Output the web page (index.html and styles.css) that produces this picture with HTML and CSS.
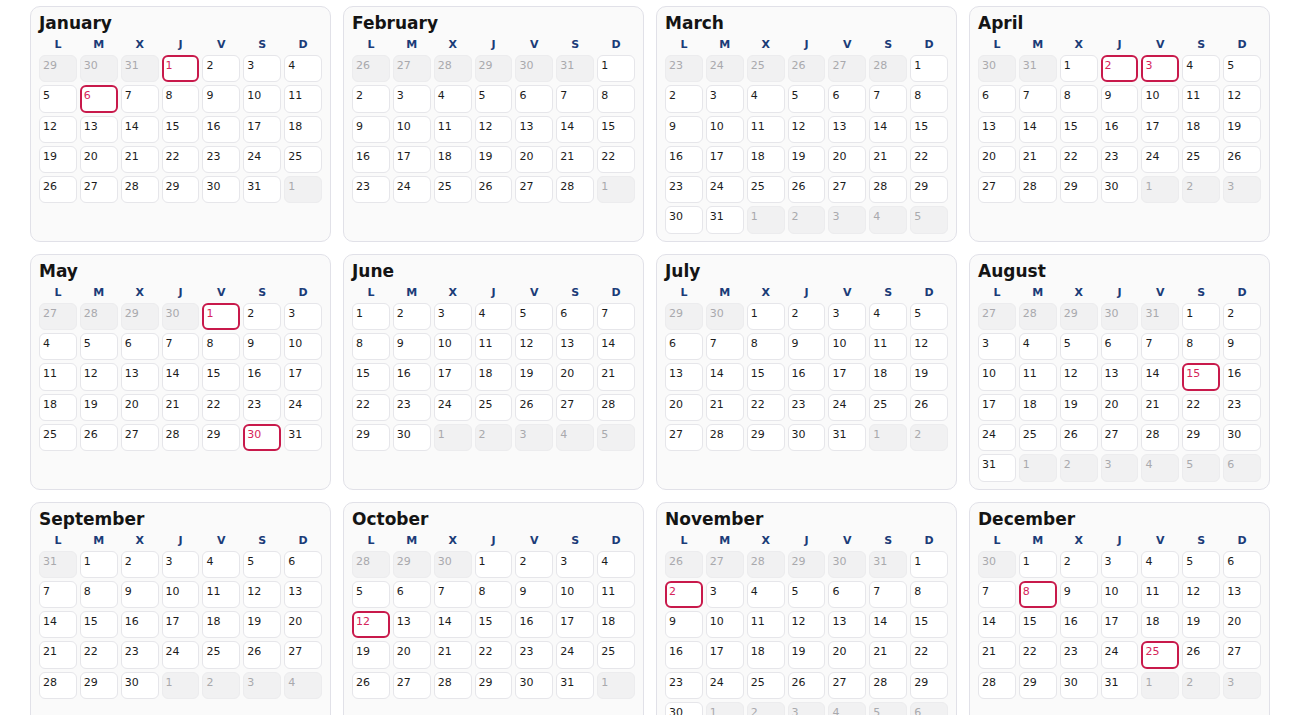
FILE: index.html
```html
<!DOCTYPE html>
<html lang="es">
<head>
<meta charset="utf-8">
<title>Calendario 2026</title>
<link rel="stylesheet" href="styles.css">
</head>
<body>
<main class="year">

<section class="month">
<h2>January</h2>
<div class="wk"><b>L</b><b>M</b><b>X</b><b>J</b><b>V</b><b>S</b><b>D</b></div>
<div class="days">
<span class="o">29</span><span class="o">30</span><span class="o">31</span><span class="h">1</span><span>2</span><span>3</span><span>4</span>
<span>5</span><span class="h">6</span><span>7</span><span>8</span><span>9</span><span>10</span><span>11</span>
<span>12</span><span>13</span><span>14</span><span>15</span><span>16</span><span>17</span><span>18</span>
<span>19</span><span>20</span><span>21</span><span>22</span><span>23</span><span>24</span><span>25</span>
<span>26</span><span>27</span><span>28</span><span>29</span><span>30</span><span>31</span><span class="o">1</span>
</div>
</section>

<section class="month">
<h2>February</h2>
<div class="wk"><b>L</b><b>M</b><b>X</b><b>J</b><b>V</b><b>S</b><b>D</b></div>
<div class="days">
<span class="o">26</span><span class="o">27</span><span class="o">28</span><span class="o">29</span><span class="o">30</span><span class="o">31</span><span>1</span>
<span>2</span><span>3</span><span>4</span><span>5</span><span>6</span><span>7</span><span>8</span>
<span>9</span><span>10</span><span>11</span><span>12</span><span>13</span><span>14</span><span>15</span>
<span>16</span><span>17</span><span>18</span><span>19</span><span>20</span><span>21</span><span>22</span>
<span>23</span><span>24</span><span>25</span><span>26</span><span>27</span><span>28</span><span class="o">1</span>
</div>
</section>

<section class="month">
<h2>March</h2>
<div class="wk"><b>L</b><b>M</b><b>X</b><b>J</b><b>V</b><b>S</b><b>D</b></div>
<div class="days">
<span class="o">23</span><span class="o">24</span><span class="o">25</span><span class="o">26</span><span class="o">27</span><span class="o">28</span><span>1</span>
<span>2</span><span>3</span><span>4</span><span>5</span><span>6</span><span>7</span><span>8</span>
<span>9</span><span>10</span><span>11</span><span>12</span><span>13</span><span>14</span><span>15</span>
<span>16</span><span>17</span><span>18</span><span>19</span><span>20</span><span>21</span><span>22</span>
<span>23</span><span>24</span><span>25</span><span>26</span><span>27</span><span>28</span><span>29</span>
<span>30</span><span>31</span><span class="o">1</span><span class="o">2</span><span class="o">3</span><span class="o">4</span><span class="o">5</span>
</div>
</section>

<section class="month">
<h2>April</h2>
<div class="wk"><b>L</b><b>M</b><b>X</b><b>J</b><b>V</b><b>S</b><b>D</b></div>
<div class="days">
<span class="o">30</span><span class="o">31</span><span>1</span><span class="h">2</span><span class="h">3</span><span>4</span><span>5</span>
<span>6</span><span>7</span><span>8</span><span>9</span><span>10</span><span>11</span><span>12</span>
<span>13</span><span>14</span><span>15</span><span>16</span><span>17</span><span>18</span><span>19</span>
<span>20</span><span>21</span><span>22</span><span>23</span><span>24</span><span>25</span><span>26</span>
<span>27</span><span>28</span><span>29</span><span>30</span><span class="o">1</span><span class="o">2</span><span class="o">3</span>
</div>
</section>

<section class="month">
<h2>May</h2>
<div class="wk"><b>L</b><b>M</b><b>X</b><b>J</b><b>V</b><b>S</b><b>D</b></div>
<div class="days">
<span class="o">27</span><span class="o">28</span><span class="o">29</span><span class="o">30</span><span class="h">1</span><span>2</span><span>3</span>
<span>4</span><span>5</span><span>6</span><span>7</span><span>8</span><span>9</span><span>10</span>
<span>11</span><span>12</span><span>13</span><span>14</span><span>15</span><span>16</span><span>17</span>
<span>18</span><span>19</span><span>20</span><span>21</span><span>22</span><span>23</span><span>24</span>
<span>25</span><span>26</span><span>27</span><span>28</span><span>29</span><span class="h">30</span><span>31</span>
</div>
</section>

<section class="month">
<h2>June</h2>
<div class="wk"><b>L</b><b>M</b><b>X</b><b>J</b><b>V</b><b>S</b><b>D</b></div>
<div class="days">
<span>1</span><span>2</span><span>3</span><span>4</span><span>5</span><span>6</span><span>7</span>
<span>8</span><span>9</span><span>10</span><span>11</span><span>12</span><span>13</span><span>14</span>
<span>15</span><span>16</span><span>17</span><span>18</span><span>19</span><span>20</span><span>21</span>
<span>22</span><span>23</span><span>24</span><span>25</span><span>26</span><span>27</span><span>28</span>
<span>29</span><span>30</span><span class="o">1</span><span class="o">2</span><span class="o">3</span><span class="o">4</span><span class="o">5</span>
</div>
</section>

<section class="month">
<h2>July</h2>
<div class="wk"><b>L</b><b>M</b><b>X</b><b>J</b><b>V</b><b>S</b><b>D</b></div>
<div class="days">
<span class="o">29</span><span class="o">30</span><span>1</span><span>2</span><span>3</span><span>4</span><span>5</span>
<span>6</span><span>7</span><span>8</span><span>9</span><span>10</span><span>11</span><span>12</span>
<span>13</span><span>14</span><span>15</span><span>16</span><span>17</span><span>18</span><span>19</span>
<span>20</span><span>21</span><span>22</span><span>23</span><span>24</span><span>25</span><span>26</span>
<span>27</span><span>28</span><span>29</span><span>30</span><span>31</span><span class="o">1</span><span class="o">2</span>
</div>
</section>

<section class="month">
<h2>August</h2>
<div class="wk"><b>L</b><b>M</b><b>X</b><b>J</b><b>V</b><b>S</b><b>D</b></div>
<div class="days">
<span class="o">27</span><span class="o">28</span><span class="o">29</span><span class="o">30</span><span class="o">31</span><span>1</span><span>2</span>
<span>3</span><span>4</span><span>5</span><span>6</span><span>7</span><span>8</span><span>9</span>
<span>10</span><span>11</span><span>12</span><span>13</span><span>14</span><span class="h">15</span><span>16</span>
<span>17</span><span>18</span><span>19</span><span>20</span><span>21</span><span>22</span><span>23</span>
<span>24</span><span>25</span><span>26</span><span>27</span><span>28</span><span>29</span><span>30</span>
<span>31</span><span class="o">1</span><span class="o">2</span><span class="o">3</span><span class="o">4</span><span class="o">5</span><span class="o">6</span>
</div>
</section>

<section class="month">
<h2>September</h2>
<div class="wk"><b>L</b><b>M</b><b>X</b><b>J</b><b>V</b><b>S</b><b>D</b></div>
<div class="days">
<span class="o">31</span><span>1</span><span>2</span><span>3</span><span>4</span><span>5</span><span>6</span>
<span>7</span><span>8</span><span>9</span><span>10</span><span>11</span><span>12</span><span>13</span>
<span>14</span><span>15</span><span>16</span><span>17</span><span>18</span><span>19</span><span>20</span>
<span>21</span><span>22</span><span>23</span><span>24</span><span>25</span><span>26</span><span>27</span>
<span>28</span><span>29</span><span>30</span><span class="o">1</span><span class="o">2</span><span class="o">3</span><span class="o">4</span>
</div>
</section>

<section class="month">
<h2>October</h2>
<div class="wk"><b>L</b><b>M</b><b>X</b><b>J</b><b>V</b><b>S</b><b>D</b></div>
<div class="days">
<span class="o">28</span><span class="o">29</span><span class="o">30</span><span>1</span><span>2</span><span>3</span><span>4</span>
<span>5</span><span>6</span><span>7</span><span>8</span><span>9</span><span>10</span><span>11</span>
<span class="h">12</span><span>13</span><span>14</span><span>15</span><span>16</span><span>17</span><span>18</span>
<span>19</span><span>20</span><span>21</span><span>22</span><span>23</span><span>24</span><span>25</span>
<span>26</span><span>27</span><span>28</span><span>29</span><span>30</span><span>31</span><span class="o">1</span>
</div>
</section>

<section class="month">
<h2>November</h2>
<div class="wk"><b>L</b><b>M</b><b>X</b><b>J</b><b>V</b><b>S</b><b>D</b></div>
<div class="days">
<span class="o">26</span><span class="o">27</span><span class="o">28</span><span class="o">29</span><span class="o">30</span><span class="o">31</span><span>1</span>
<span class="h">2</span><span>3</span><span>4</span><span>5</span><span>6</span><span>7</span><span>8</span>
<span>9</span><span>10</span><span>11</span><span>12</span><span>13</span><span>14</span><span>15</span>
<span>16</span><span>17</span><span>18</span><span>19</span><span>20</span><span>21</span><span>22</span>
<span>23</span><span>24</span><span>25</span><span>26</span><span>27</span><span>28</span><span>29</span>
<span>30</span><span class="o">1</span><span class="o">2</span><span class="o">3</span><span class="o">4</span><span class="o">5</span><span class="o">6</span>
</div>
</section>

<section class="month">
<h2>December</h2>
<div class="wk"><b>L</b><b>M</b><b>X</b><b>J</b><b>V</b><b>S</b><b>D</b></div>
<div class="days">
<span class="o">30</span><span>1</span><span>2</span><span>3</span><span>4</span><span>5</span><span>6</span>
<span>7</span><span class="h">8</span><span>9</span><span>10</span><span>11</span><span>12</span><span>13</span>
<span>14</span><span>15</span><span>16</span><span>17</span><span>18</span><span>19</span><span>20</span>
<span>21</span><span>22</span><span>23</span><span>24</span><span class="h">25</span><span>26</span><span>27</span>
<span>28</span><span>29</span><span>30</span><span>31</span><span class="o">1</span><span class="o">2</span><span class="o">3</span>
</div>
</section>

</main>
</body>
</html>
```

FILE: styles.css
```css
* {
  box-sizing: border-box;
}

html, body {
  margin: 0;
  padding: 0;
  background: #ffffff;
}

body {
  font-family: "DejaVu Sans", "Noto Sans", sans-serif;
  color: #1c1c1c;
}

.year {
  display: grid;
  grid-template-columns: repeat(4, 1fr);
  gap: 12px;
  padding: 6px 30px 30px;
}

.month {
  background: #fafafa;
  border: 1px solid #e1e1e8;
  border-radius: 10px;
  padding: 5px 8px 7px;
}

.month h2 {
  margin: 0;
  font-size: 17px;
  line-height: 22px;
  font-weight: bold;
  color: #141414;
}

.wk {
  display: grid;
  grid-template-columns: repeat(7, 1fr);
  column-gap: 3px;
  margin-top: 4px;
  margin-bottom: 3px;
}

.wk b {
  text-align: center;
  font-size: 11px;
  line-height: 14px;
  font-weight: bold;
  color: #1b3c78;
}

.days {
  display: grid;
  grid-template-columns: repeat(7, 1fr);
  grid-auto-rows: 27.3px;
  gap: 3px 3px;
}

.days span {
  background: #ffffff;
  border: 1px solid #e6e6ea;
  border-radius: 6px;
  padding: 3px 0 0 3px;
  font-size: 11px;
  line-height: 13px;
  color: #1c1c1c;
}

.days span.o {
  background: #f1f1f2;
  border-color: #ececee;
  color: #a9a9ad;
}

.days span.h {
  border: 2px solid #c8194b;
  padding: 2px 0 0 2px;
  color: #d6245a;
}
```
